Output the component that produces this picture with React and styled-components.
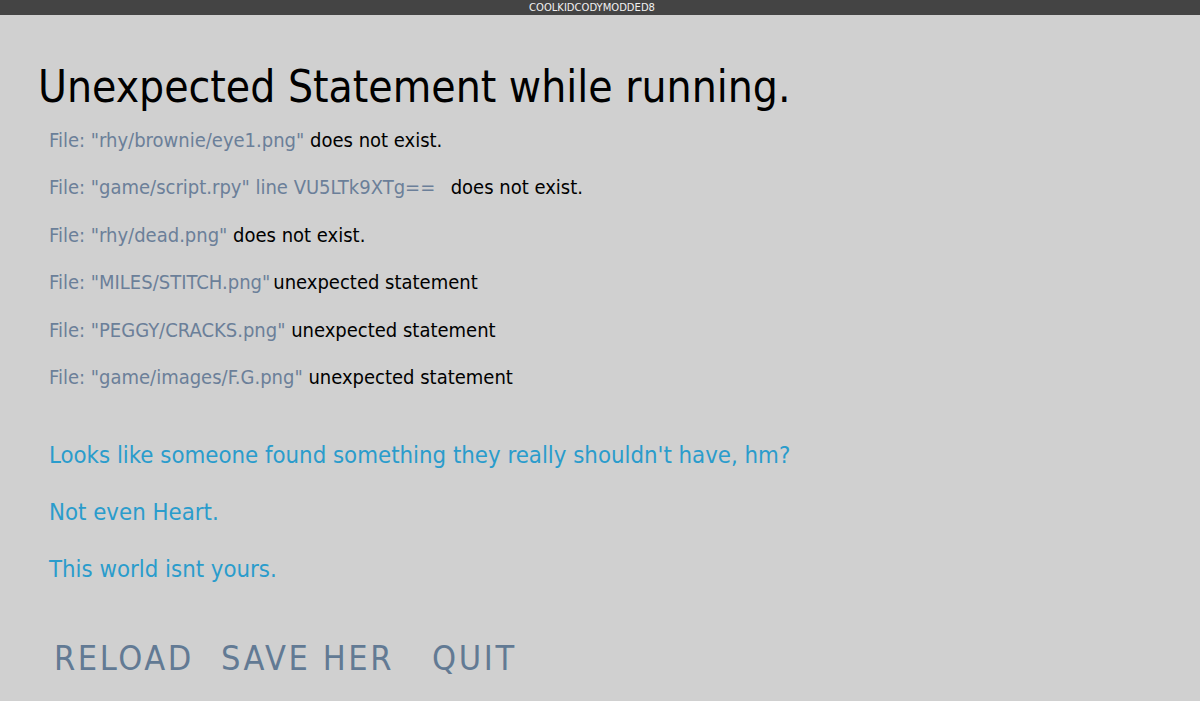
import styled, { createGlobalStyle } from "styled-components";

const GlobalStyle = createGlobalStyle`
  html, body {
    margin: 0;
    padding: 0;
    background: #d0d0d0;
    font-family: "DejaVu Sans", "Liberation Sans", sans-serif;
  }
`;

const errors = [
  { file: '"rhy/brownie/eye1.png"', msg: "does not exist." },
  { file: '"game/script.rpy" line VU5LTk9XTg== ', msg: "does not exist.", wide: true },
  { file: '"rhy/dead.png"', msg: "does not exist." },
  { file: '"MILES/STITCH.png"', msg: "unexpected statement", tight: true },
  { file: '"PEGGY/CRACKS.png"', msg: "unexpected statement" },
  { file: '"game/images/F.G.png"', msg: "unexpected statement" },
];

const lines = [
  "Looks like someone found something they really shouldn't have, hm?",
  "Not even Heart.",
  "This world isnt yours.",
];

const App = () => {
  return (
    <>
      <GlobalStyle />
      <Screen>
        <TitleBar>COOLKIDCODYMODDED8</TitleBar>
        <Body>
          <Heading>Unexpected Statement while running.</Heading>
          <ErrorList>
            {errors.map((e, i) => (
              <ErrorRow key={i}>
                <FilePath>File: {e.file}</FilePath>
                {e.tight ? "" : " "}
                <Message $shift={e.tight ? 3 : e.wide ? 4 : 0}>{e.msg}</Message>
              </ErrorRow>
            ))}
          </ErrorList>
          <Taunts>
            {lines.map((t, i) => (
              <Taunt key={i}>{t}</Taunt>
            ))}
          </Taunts>
          <Menu>
            <MenuButton>RELOAD</MenuButton>
            <MenuButton>SAVE HER</MenuButton>
            <MenuButton $gap={11}>QUIT</MenuButton>
          </Menu>
        </Body>
      </Screen>
    </>
  );
};

const Screen = styled.div`
  width: 1200px;
  height: 701px;
  display: flex;
  flex-direction: column;
  background: #d0d0d0;
  overflow: hidden;
`;

const TitleBar = styled.div`
  height: 15px;
  flex-shrink: 0;
  padding-right: 16px;
  background: #444444;
  color: #f0f0f0;
  font-size: 10px;
  line-height: 15px;
  text-align: center;
`;

const Body = styled.div`
  display: flex;
  flex-direction: column;
  padding: 0 0 0 38px;
`;

const Heading = styled.h1`
  margin: 45px 0 0;
  font-family: "DejaVu Sans Condensed", "DejaVu Sans", sans-serif;
  font-weight: 400;
  font-size: 44px;
  line-height: 54px;
  color: #000;
`;

const ErrorList = styled.div`
  display: flex;
  flex-direction: column;
  margin-top: 3px;
  padding-left: 11px;
`;

const ErrorRow = styled.div`
  font-family: "DejaVu Sans Condensed", "DejaVu Sans", sans-serif;
  font-size: 20px;
  line-height: 47.4px;
  white-space: pre;
`;

const FilePath = styled.span`
  color: #6b7f99;
`;

const Message = styled.span`
  margin-left: ${(p) => p.$shift}px;
  color: #000;
`;

const Taunts = styled.div`
  display: flex;
  flex-direction: column;
  margin-top: 26px;
  padding-left: 11px;
`;

const Taunt = styled.p`
  margin: 0;
  font-family: "DejaVu Sans Condensed", "DejaVu Sans", sans-serif;
  font-size: 23.75px;
  line-height: 57px;
  color: #2a9ccc;
`;

const Menu = styled.div`
  display: flex;
  margin-top: 40px;
  padding-left: 16px;
`;

const MenuButton = styled.button`
  margin-left: ${(p) => (p.$gap ? `${p.$gap}px` : "0")};
  margin-right: 27px;
  padding: 0;
  border: none;
  background: none;
  font-family: "DejaVu Sans Condensed", "DejaVu Sans", sans-serif;
  font-size: 34px;
  letter-spacing: 2.6px;
  color: #627a94;
  cursor: pointer;
`;

export default App;
